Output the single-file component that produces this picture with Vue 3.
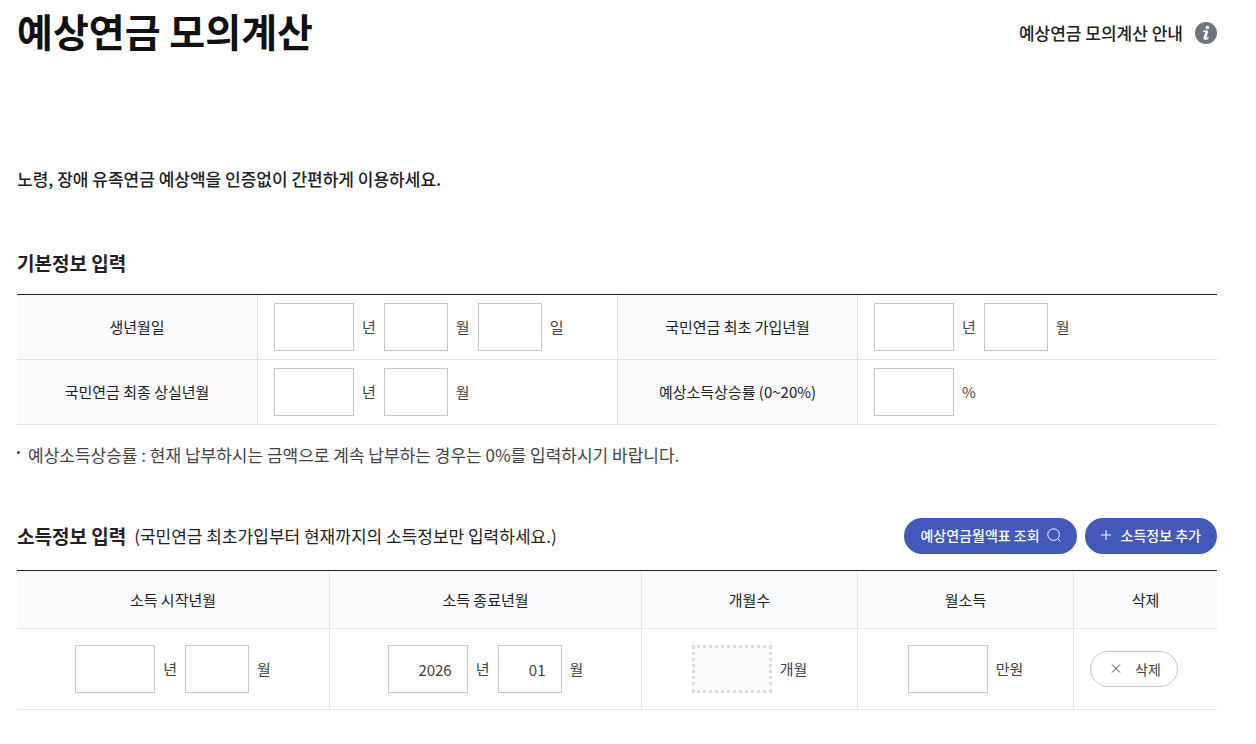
<script setup>
import { ref } from 'vue';

const basicRows = [
  [
    {
      label: '생년월일',
      fields: [
        { id: 'birthYear', size: 'wide', unit: '년' },
        { id: 'birthMonth', size: 'narrow', unit: '월' },
        { id: 'birthDay', size: 'narrow', unit: '일' },
      ],
    },
    {
      label: '국민연금 최초 가입년월',
      fields: [
        { id: 'joinYear', size: 'wide', unit: '년' },
        { id: 'joinMonth', size: 'narrow', unit: '월' },
      ],
    },
  ],
  [
    {
      label: '국민연금 최종 상실년월',
      fields: [
        { id: 'lossYear', size: 'wide', unit: '년' },
        { id: 'lossMonth', size: 'narrow', unit: '월' },
      ],
    },
    {
      label: '예상소득상승률 (0~20%)',
      fields: [{ id: 'raiseRate', size: 'wide', unit: '%' }],
    },
  ],
]

const basic = ref({
  birthYear: '',
  birthMonth: '',
  birthDay: '',
  joinYear: '',
  joinMonth: '',
  lossYear: '',
  lossMonth: '',
  raiseRate: '',
})

const incomeHeads = ['소득 시작년월', '소득 종료년월', '개월수', '월소득', '삭제']

let nextId = 1
const newIncome = () => ({
  id: nextId++,
  startYear: '',
  startMonth: '',
  endYear: '2026',
  endMonth: '01',
  months: '',
  amount: '',
})

const incomes = ref([newIncome()])

const addIncome = () => {
  incomes.value.push(newIncome())
}

const removeIncome = (id) => {
  incomes.value = incomes.value.filter((income) => income.id !== id)
}
</script>

<template>
  <main class="page">
    <header class="page-head">
      <h1>예상연금 모의계산</h1>
      <a href="#guide" class="guide">
        예상연금 모의계산 안내
        <svg class="icon-info" viewBox="0 0 22 22" aria-hidden="true">
          <circle cx="11" cy="11" r="11" fill="#6d7482" />
          <circle cx="12.4" cy="5.5" r="1.8" fill="#fff" />
          <path
            d="M8.6 9.2h3.3L10.3 15.8q-.2 1.6 1 1.3 .9-.3 1.8-1.3"
            fill="none"
            stroke="#fff"
            stroke-width="1.5"
            stroke-linecap="round"
            stroke-linejoin="round"
          />
          <path d="M11.6 9.8L9.9 16.4" stroke="#fff" stroke-width="2.8" stroke-linecap="round" />
        </svg>
      </a>
    </header>

    <p class="intro">노령, 장애 유족연금 예상액을 인증없이 간편하게 이용하세요.</p>

    <section>
      <h2 class="basic-title">기본정보 입력</h2>
      <table class="basic-table">
        <colgroup>
          <col class="col-label" />
          <col class="col-value" />
          <col class="col-label" />
          <col class="col-value" />
        </colgroup>
        <tbody>
          <tr v-for="(row, index) in basicRows" :key="index">
            <template v-for="item in row" :key="item.label">
              <th scope="row">{{ item.label }}</th>
              <td>
                <div class="fields">
                  <template v-for="field in item.fields" :key="field.id">
                    <input
                      :id="field.id"
                      v-model="basic[field.id]"
                      type="text"
                      :class="field.size"
                    />
                    <label :for="field.id">{{ field.unit }}</label>
                  </template>
                </div>
              </td>
            </template>
          </tr>
        </tbody>
      </table>
      <ul class="notes">
        <li>예상소득상승률 : 현재 납부하시는 금액으로 계속 납부하는 경우는 0%를 입력하시기 바랍니다.</li>
      </ul>
    </section>

    <section>
      <div class="section-head">
        <h2>소득정보 입력</h2>
        <span class="sub">(국민연금 최초가입부터 현재까지의 소득정보만 입력하세요.)</span>
        <div class="actions">
          <button type="button" class="btn primary search">
            예상연금월액표 조회
            <svg class="icon-search" viewBox="0 0 14 14" aria-hidden="true">
              <circle cx="6.6" cy="6.6" r="5.8" />
              <path d="M10.8 10.8l2.6 2.6" />
            </svg>
          </button>
          <button type="button" class="btn primary add" @click="addIncome">
            <svg class="icon-small" viewBox="0 0 10 10" aria-hidden="true">
              <path d="M5 0v10M0 5h10" />
            </svg>
            소득정보 추가
          </button>
        </div>
      </div>
      <table class="income-table">
        <colgroup>
          <col class="col-period" />
          <col class="col-period" />
          <col class="col-amount" />
          <col class="col-amount" />
          <col class="col-delete" />
        </colgroup>
        <thead>
          <tr>
            <th v-for="head in incomeHeads" :key="head" scope="col">{{ head }}</th>
          </tr>
        </thead>
        <tbody>
          <tr v-for="income in incomes" :key="income.id">
            <td>
              <div class="fields">
                <input :id="'startYear' + income.id" v-model="income.startYear" type="text" class="wide" />
                <label :for="'startYear' + income.id">년</label>
                <input :id="'startMonth' + income.id" v-model="income.startMonth" type="text" class="narrow" />
                <label :for="'startMonth' + income.id">월</label>
              </div>
            </td>
            <td>
              <div class="fields">
                <input :id="'endYear' + income.id" v-model="income.endYear" type="text" class="wide" />
                <label :for="'endYear' + income.id">년</label>
                <input :id="'endMonth' + income.id" v-model="income.endMonth" type="text" class="narrow" />
                <label :for="'endMonth' + income.id">월</label>
              </div>
            </td>
            <td>
              <div class="fields">
                <input :id="'months' + income.id" v-model="income.months" type="text" class="wide" readonly />
                <label :for="'months' + income.id">개월</label>
              </div>
            </td>
            <td>
              <div class="fields">
                <input :id="'amount' + income.id" v-model="income.amount" type="text" class="wide" />
                <label :for="'amount' + income.id">만원</label>
              </div>
            </td>
            <td>
              <button type="button" class="btn outline" @click="removeIncome(income.id)">
                <svg class="icon-small" viewBox="0 0 10 10" aria-hidden="true">
                  <path d="M1 .5l8 8M9 .5l-8 8" />
                </svg>
                삭제
              </button>
            </td>
          </tr>
        </tbody>
      </table>
    </section>
  </main>
</template>

<style>
body {
  background: #fff;
}
</style>

<style scoped>
.page {
  padding: 0 39px 32px 17px;
  color: #222;
  font-family: "Noto Sans CJK KR", "Noto Sans", sans-serif;
  font-size: 15px;
  line-height: 24px;
}

.page-head {
  display: flex;
  align-items: center;
  justify-content: space-between;
  height: 64px;
}

h1 {
  margin: 0;
  padding-bottom: 4px;
  color: #111;
  font-size: 39px;
  line-height: 56px;
  font-weight: 700;
}

.guide {
  display: flex;
  align-items: center;
  gap: 12px;
  padding-top: 1px;
  color: #222;
  font-size: 17px;
  font-weight: 500;
  text-decoration: none;
}

.icon-info {
  width: 22px;
  height: 22px;
}

.intro {
  margin: 103px 0 60px;
  font-size: 17px;
  font-weight: 500;
}

.section-head {
  display: flex;
  align-items: center;
  height: 36px;
  margin-bottom: 16px;
}

h2 {
  margin: 0;
  font-size: 19px;
  font-weight: 700;
}

.basic-title {
  margin-bottom: 19px;
}

.sub {
  margin-left: 8px;
  font-size: 17px;
}

.actions {
  display: flex;
  gap: 8px;
  margin-left: auto;
}

.btn {
  display: flex;
  align-items: center;
  height: 36px;
  padding: 0 16px 2px;
  border: 0;
  border-radius: 18px;
  font-family: inherit;
  font-size: 14px;
  cursor: pointer;
}

.btn svg {
  fill: none;
  stroke: currentColor;
  stroke-width: 1;
}

.primary {
  background: #4259bb;
  color: #fff;
  font-weight: 500;
}

.search {
  gap: 7px;
}

.add {
  gap: 10px;
}

.outline {
  gap: 14px;
  padding: 0 16px 1px 20px;
  border: 1px solid #c6c6c6;
  background: #fff;
  color: #444;
}

.icon-search {
  width: 14px;
  height: 14px;
}

.icon-small {
  width: 10px;
  height: 10px;
}

table {
  width: 100%;
  border-top: 1px solid #222;
  border-spacing: 0;
  table-layout: fixed;
}

.col-label {
  width: 20%;
}

.col-value {
  width: 30%;
}

.col-period {
  width: 26%;
}

.col-amount {
  width: 18%;
}

.col-delete {
  width: 12%;
}

th,
td {
  padding: 8px 16px;
  border-left: 1px solid #e4e4e4;
  border-bottom: 1px solid #e4e4e4;
}

th:first-child,
td:first-child {
  border-left: 0;
}

th {
  background: #f9fafc;
  font-weight: 400;
  text-align: center;
}

.income-table th {
  padding: 17px 16px 16px;
}

.income-table td {
  padding: 16px;
}

.fields {
  display: flex;
  align-items: center;
  gap: 8px;
  color: #444;
}

.income-table .fields {
  justify-content: center;
}

input {
  box-sizing: border-box;
  height: 48px;
  padding: 0 15px;
  border: 1px solid #c6c6c6;
  background: #fff;
  color: #444;
  font-family: inherit;
  font-size: 15px;
  text-align: right;
}

input[readonly] {
  border: 3px dotted #ddd;
  background: #f9fafc;
}

.wide {
  width: 80px;
}

.narrow {
  width: 64px;
}

.notes {
  margin: 18px 0 51px;
  padding: 0;
  list-style: none;
  color: #444;
  font-size: 17px;
}

.notes li {
  display: flex;
  gap: 8px;
}

.notes li::before {
  content: "";
  width: 3px;
  height: 3px;
  margin-top: 8px;
  border-radius: 50%;
  background: #444;
}
</style>
